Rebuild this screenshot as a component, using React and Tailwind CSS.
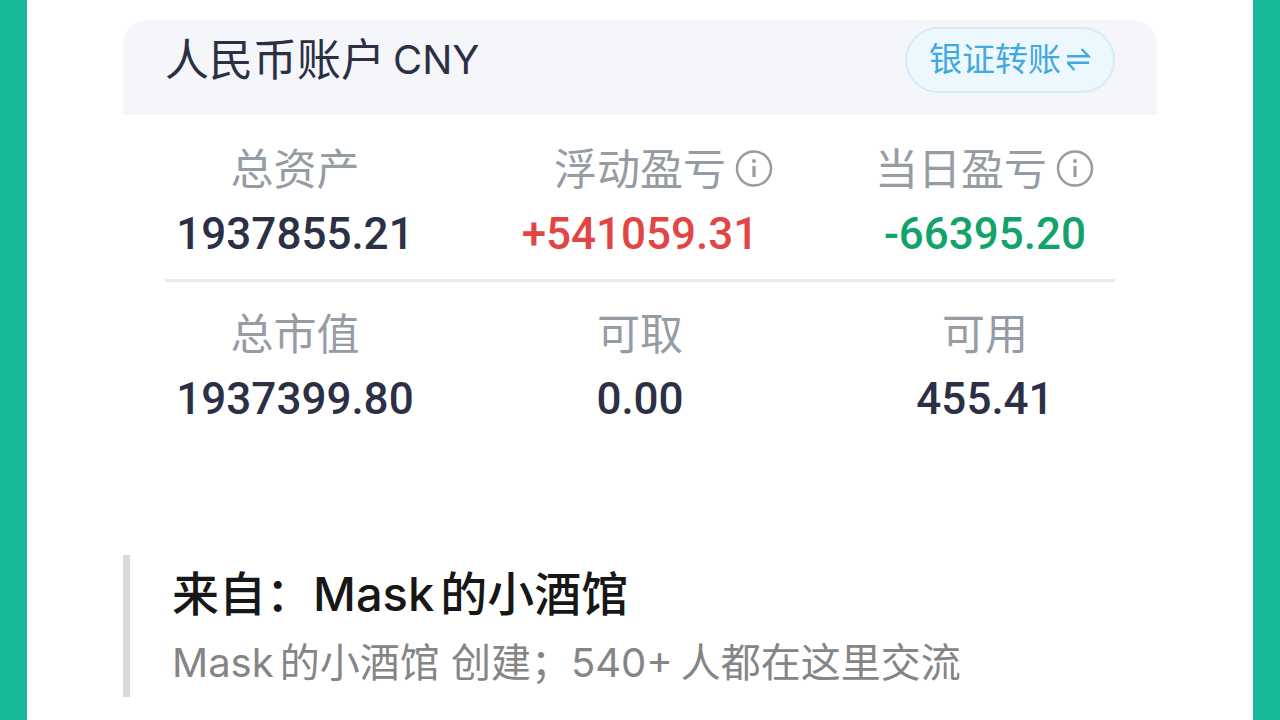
const TransferIcon = () => (
  <svg className="h-6 w-6" viewBox="0 0 24 24" fill="none" stroke="currentColor" strokeWidth={2.4} aria-hidden="true">
    <path d="M0 8.2H21.5L14.5 1M22 14.8H0.5L7.5 22" />
  </svg>
);

const InfoIcon = () => (
  <svg className="h-10 w-10" viewBox="0 0 40 40" fill="none" stroke="currentColor" strokeWidth={2.5} aria-hidden="true">
    <circle cx="20" cy="19.5" r="17" />
    <path d="M20 17V28" strokeWidth={3.2} />
    <circle cx="20" cy="12" r="2" fill="currentColor" stroke="none" />
  </svg>
);

const rows = [
  [
    { label: '总资产', value: '1937855.21', color: 'text-[#2b3045]' },
    { label: '浮动盈亏', value: '+541059.31', color: 'text-[#e34545]', info: true, labelClass: 'pl-12' },
    { label: '当日盈亏', value: '-66395.20', color: 'text-[#12a36b]', info: true },
  ],
  [
    { label: '总市值', value: '1937399.80', color: 'text-[#2b3045]' },
    { label: '可取', value: '0.00', color: 'text-[#2b3045]' },
    { label: '可用', value: '455.41', color: 'text-[#2b3045]' },
  ],
];

const Stat = ({ label, value, color, info, labelClass = '' }) => (
  <div className="flex flex-col items-center">
    <dt className={`flex h-16 items-center gap-2 text-[43px] text-[#959ca4] ${labelClass}`}>
      {label}
      {info && (
        <button type="button" aria-label={label}>
          <InfoIcon />
        </button>
      )}
    </dt>
    <dd className={`font-[Roboto,sans-serif] text-[44px] leading-[66px] font-medium ${color}`}>{value}</dd>
  </div>
);

const App = () => {
  return (
    <div className="min-h-screen border-x-[27px] border-[#17b897] bg-white px-24 pt-5 font-[Inter,'Noto_Sans_CJK_SC',sans-serif]">
      <section>
        <header className="flex h-[95px] items-center justify-between rounded-t-3xl bg-[#f4f6fa] px-[42px] pb-4">
          <h1 className="flex items-center gap-2 text-[44px] text-[#2b3045]">
            人民币账户 <span className="text-[40px]">CNY</span>
          </h1>
          <button
            type="button"
            className="flex h-[66px] items-center gap-1.5 rounded-full border-2 border-[#d5ecf8] bg-[#edf8fe] px-[22px] text-[33px] text-[#42a9df]"
          >
            银证转账
            <TransferIcon />
          </button>
        </header>
        <div className="px-[42px] pt-[22px]">
          <dl className="grid grid-cols-[260px_1fr_260px] border-b-3 border-[#e6ebef] pb-3">
            {rows[0].map(stat => (
              <Stat key={stat.label} {...stat} />
            ))}
          </dl>
          <dl className="grid grid-cols-[260px_1fr_260px] pt-5">
            {rows[1].map(stat => (
              <Stat key={stat.label} {...stat} />
            ))}
          </dl>
        </div>
      </section>
      <blockquote className="mt-[123px] border-l-[7px] border-[#d9d9d9] pt-1 pl-[42px]">
        <p className="text-[47px] leading-[70px] font-medium text-[#171717]">
          来自：<span className="mr-1.5">Mask</span>的小酒馆
        </p>
        <p className="text-[40px] leading-[68px] text-[#858585]">
          <span className="mr-1.5">Mask</span>的小酒馆 创建；<span className="mr-2">540+</span>人都在这里交流
        </p>
      </blockquote>
    </div>
  );
};

export default App;
